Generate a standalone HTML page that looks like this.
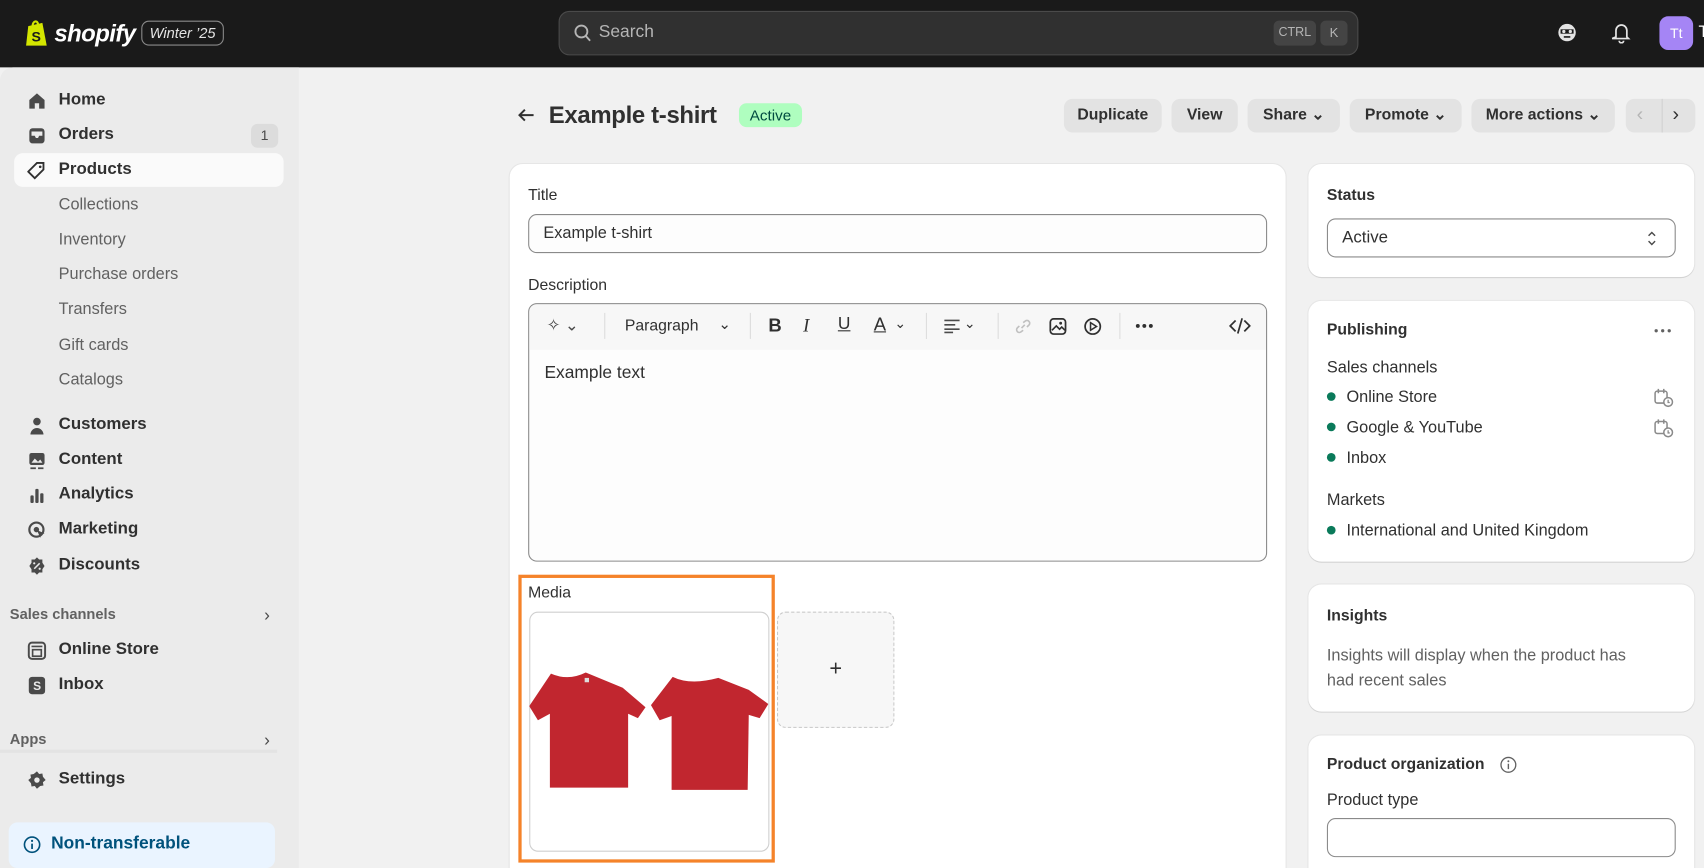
<!DOCTYPE html>
<html><head><meta charset="utf-8">
<style>
*{box-sizing:border-box;margin:0;padding:0}
html,body{width:1704px;height:868px;overflow:hidden;background:#f1f1f1}
#w{position:absolute;left:0;top:0;width:1568px;height:799px;transform:scale(1.08673,1.0864);transform-origin:0 0;font-family:"Liberation Sans",sans-serif;color:#303030;font-size:15px;line-height:1.4;background:#f1f1f1;overflow:hidden}
.a{position:absolute}
.top{left:0;top:0;width:1568px;height:62px;background:#1a1a1a}
.side{left:0;top:62px;width:275px;height:737px;background:#ebebeb;border-top-left-radius:12px}
.nav{position:absolute;left:54px;font-size:15.5px;color:#303030;font-weight:600}
.sub{position:absolute;left:54px;font-size:15px;color:#616161}
.ic{position:absolute;left:25px;width:18px;height:18px}
.btn{position:absolute;top:91px;height:31px;background:#e3e3e3;border-radius:8px;font-size:14.5px;font-weight:600;color:#303030;line-height:31px;text-align:center}
.card{position:absolute;background:#fff;border-radius:12px;box-shadow:0 1px 0 #d4d4d4,0 0 0 1px #e6e6e6}
.lbl{position:absolute;font-size:14.5px;color:#303030}
.h{position:absolute;font-size:14.5px;font-weight:700;color:#303030}
.dot{position:absolute;left:1221px;width:8px;height:8px;border-radius:50%;background:#0a7a5a}
.pt{position:absolute;left:1239px;font-size:15px;color:#303030}
</style></head><body><div id="w">
<div class="a top"></div>
<svg class="a" style="left:22px;top:17px" width="24" height="27" viewBox="0 0 24 27"><path d="M4 7 L17 4 L21 25 L2 25 Z" fill="#d4e600"/><path d="M8 7 C8 2 13 1 13 6" stroke="#d4e600" stroke-width="2" fill="none"/><text x="7" y="21" font-size="13" font-weight="700" fill="#1a1a1a" font-family="Liberation Sans">S</text></svg>
<div class="a" style="left:50px;top:16px;color:#fff;font-size:22px;font-weight:700;font-style:italic;letter-spacing:-0.5px">shopify</div>
<div class="a" style="left:130px;top:19px;width:76px;height:23px;border:1px solid #8a8a8a;border-radius:7px;color:#e3e3e3;font-size:13.5px;font-style:italic;text-align:center;line-height:21px">Winter ’25</div>
<div class="a" style="left:514px;top:10px;width:736px;height:41px;background:#303030;border:1px solid #4a4a4a;border-radius:10px"></div>
<svg class="a" style="left:528px;top:22px" width="16" height="17" viewBox="0 0 16 17"><circle cx="7" cy="7" r="5.5" stroke="#b5b5b5" stroke-width="1.7" fill="none"/><path d="M11 11l4 4.5" stroke="#b5b5b5" stroke-width="1.7"/></svg>
<div class="a" style="left:551px;top:19px;color:#b5b5b5;font-size:16px">Search</div>
<div class="a" style="left:1172px;top:19px;width:39px;height:23px;background:#444;border-radius:5px;color:#b5b5b5;font-size:11.5px;text-align:center;line-height:23px">CTRL</div>
<div class="a" style="left:1215px;top:19px;width:25px;height:23px;background:#444;border-radius:5px;color:#b5b5b5;font-size:12px;text-align:center;line-height:23px">K</div>
<svg class="a" style="left:1432px;top:20px" width="20" height="20" viewBox="0 0 20 20"><circle cx="10" cy="10" r="8" fill="#e3e3e3"/><rect x="4" y="7" width="12" height="4" fill="#1a1a1a"/><circle cx="7" cy="9" r="1.5" fill="#e3e3e3"/><circle cx="13" cy="9" r="1.5" fill="#e3e3e3"/><path d="M7 14h6" stroke="#1a1a1a" stroke-width="1.5"/></svg>
<svg class="a" style="left:1483px;top:20px" width="18" height="20" viewBox="0 0 18 20"><path d="M4 14V8a5 5 0 0110 0v6l1.5 1.5h-15z" stroke="#e3e3e3" stroke-width="1.6" fill="none"/><path d="M7 17.5a2 2 0 004 0" stroke="#e3e3e3" stroke-width="1.6" fill="none"/></svg>
<div class="a" style="left:1527px;top:15px;width:31px;height:31px;background:#a585f5;border-radius:8px;color:#fff;font-size:13px;text-align:center;line-height:31px">Tt</div>
<div class="a" style="left:1563px;top:19px;color:#fff;font-size:15px">T</div>

<div class="a side"></div>
<div class="a" style="left:13px;top:141px;width:248px;height:31px;background:#fafafa;border-radius:8px"></div>
<svg class="ic" style="top:84px" viewBox="0 0 18 18"><path d="M2 8L9 2l7 6v8H11v-5H7v5H2z" fill="#4a4a4a"/></svg>
<div class="nav" style="top:81px">Home</div>
<svg class="ic" style="top:116px" viewBox="0 0 18 18"><rect x="2" y="2" width="14" height="14" rx="3" fill="#4a4a4a"/><path d="M4 9h3l1 2h2l1-2h3V5H4z" fill="#ebebeb"/></svg>
<div class="nav" style="top:113px">Orders</div>
<div class="a" style="left:231px;top:114px;width:25px;height:22px;background:#dcdcdc;border-radius:6px;font-size:13px;text-align:center;line-height:22px;color:#4a4a4a">1</div>
<svg class="ic" style="top:148px" viewBox="0 0 18 18"><path d="M9 2h6v6l-8 8-6-6z" stroke="#303030" stroke-width="1.7" fill="none"/><circle cx="12" cy="5.5" r="1.2" fill="#303030"/></svg>
<div class="nav" style="top:145px">Products</div>
<div class="sub" style="top:178px">Collections</div>
<div class="sub" style="top:210px">Inventory</div>
<div class="sub" style="top:242px">Purchase orders</div>
<div class="sub" style="top:274px">Transfers</div>
<div class="sub" style="top:307px">Gift cards</div>
<div class="sub" style="top:339px">Catalogs</div>
<svg class="ic" style="top:383px" viewBox="0 0 18 18"><circle cx="9" cy="5" r="3.5" fill="#4a4a4a"/><path d="M3 17a6 6 0 0112 0z" fill="#4a4a4a"/></svg>
<div class="nav" style="top:380px">Customers</div>
<svg class="ic" style="top:415px" viewBox="0 0 18 18"><rect x="2" y="2" width="14" height="11" rx="2" fill="#4a4a4a"/><path d="M4 11l3-4 3 3 2-2 2 3z" fill="#ebebeb"/><path d="M3 16h5M10 16h5" stroke="#4a4a4a" stroke-width="1.6"/></svg>
<div class="nav" style="top:412px">Content</div>
<svg class="ic" style="top:447px" viewBox="0 0 18 18"><rect x="3" y="9" width="3" height="7" rx="1" fill="#4a4a4a"/><rect x="7.5" y="3" width="3" height="13" rx="1" fill="#4a4a4a"/><rect x="12" y="7" width="3" height="9" rx="1" fill="#4a4a4a"/></svg>
<div class="nav" style="top:444px">Analytics</div>
<svg class="ic" style="top:479px" viewBox="0 0 18 18"><circle cx="8.5" cy="8.5" r="6.5" stroke="#4a4a4a" stroke-width="2" fill="none"/><circle cx="8.5" cy="8.5" r="2.5" fill="#4a4a4a"/><path d="M9 9l7 3-3 1-1 3z" fill="#4a4a4a"/></svg>
<div class="nav" style="top:476px">Marketing</div>
<svg class="ic" style="top:512px" viewBox="0 0 18 18"><path d="M9 1l2 2h3v3l2 3-2 3v3h-3l-2 2-2-2H4v-3L2 9l2-3V3h3z" fill="#4a4a4a"/><path d="M6.5 11.5l5-5" stroke="#ebebeb" stroke-width="1.4"/><circle cx="6.5" cy="6.5" r="1" fill="#ebebeb"/><circle cx="11.5" cy="11.5" r="1" fill="#ebebeb"/></svg>
<div class="nav" style="top:509px">Discounts</div>
<div class="a" style="left:9px;top:557px;font-size:13.5px;font-weight:700;color:#616161">Sales channels</div>
<div class="a" style="left:243px;top:556px;font-size:16px;color:#4a4a4a">›</div>
<svg class="ic" style="top:590px" viewBox="0 0 18 18"><rect x="1.5" y="1.5" width="15" height="15" rx="3" stroke="#4a4a4a" stroke-width="1.8" fill="none"/><path d="M4 5h10M5 8h8v6H5z" stroke="#4a4a4a" stroke-width="1.5" fill="none"/></svg>
<div class="nav" style="top:587px">Online Store</div>
<svg class="ic" style="top:622px" viewBox="0 0 18 18"><rect x="1.5" y="1" width="15" height="16" rx="3" fill="#4a4a4a"/><text x="5.5" y="13" font-size="11" font-weight="700" fill="#ebebeb" font-family="Liberation Sans">S</text></svg>
<div class="nav" style="top:619px">Inbox</div>
<div class="a" style="left:9px;top:672px;font-size:13.5px;font-weight:700;color:#616161">Apps</div>
<div class="a" style="left:243px;top:671px;font-size:16px;color:#4a4a4a">›</div>
<div class="a" style="left:0;top:690px;width:255px;height:3px;background:#e3e3e3"></div>
<svg class="ic" style="top:709px" viewBox="0 0 18 18"><path d="M9 1l2 2.5 3-.5.5 3L17 9l-2.5 2 .5 3-3 .5L9 17l-2-2.5-3 .5-.5-3L1 9l2.5-2L3 4l3-.5z" fill="#4a4a4a"/><circle cx="9" cy="9" r="2.5" fill="#ebebeb"/></svg>
<div class="nav" style="top:706px">Settings</div>
<div class="a" style="left:8px;top:757px;width:245px;height:42px;background:#eaf4ff;border-radius:8px"></div>
<svg class="a" style="left:21px;top:769px" width="17" height="17" viewBox="0 0 17 17"><circle cx="8.5" cy="8.5" r="7" stroke="#00527c" stroke-width="1.5" fill="none"/><path d="M8.5 7.5v5" stroke="#00527c" stroke-width="1.6"/><circle cx="8.5" cy="5" r="1" fill="#00527c"/></svg>
<div class="a" style="left:47px;top:766px;font-size:16px;font-weight:600;color:#00527c">Non-transferable</div>

<svg class="a" style="left:475px;top:98px" width="18" height="16" viewBox="0 0 18 16"><path d="M16 8H3M8 3L3 8l5 5" stroke="#303030" stroke-width="1.8" fill="none"/></svg>
<div class="a" style="left:505px;top:91px;font-size:22px;font-weight:700;color:#303030;letter-spacing:-0.3px;line-height:30px">Example t-shirt</div>
<div class="a" style="left:680px;top:95px;width:58px;height:22px;background:#affebf;border-radius:7px;color:#014b40;font-size:14px;text-align:center;line-height:22px">Active</div>
<div class="btn" style="left:979px;width:90px">Duplicate</div>
<div class="btn" style="left:1078px;width:61px">View</div>
<div class="btn" style="left:1148px;width:85px">Share ⌄</div>
<div class="btn" style="left:1242px;width:103px">Promote ⌄</div>
<div class="btn" style="left:1354px;width:132px">More actions ⌄</div>
<div class="btn" style="left:1496px;width:64px"></div>
<div class="a" style="left:1529px;top:91px;width:1px;height:31px;background:#d0d0d0"></div>
<div class="a" style="left:1506px;top:93px;font-size:18px;color:#b5b5b5">‹</div>
<div class="a" style="left:1539px;top:93px;font-size:18px;color:#303030">›</div>

<div class="card" style="left:469px;top:151px;width:714px;height:660px"></div>
<div class="lbl" style="left:486px;top:170px">Title</div>
<div class="a" style="left:486px;top:197px;width:680px;height:36px;border:1px solid #8a8a8a;border-radius:8px;background:#fdfdfd"></div>
<div class="a" style="left:500px;top:204px;font-size:15px">Example t-shirt</div>
<div class="lbl" style="left:486px;top:253px">Description</div>
<div class="a" style="left:486px;top:279px;width:680px;height:238px;border:1px solid #8a8a8a;border-radius:8px;background:#fdfdfd;overflow:hidden"><div style="height:42px;background:#f7f7f7"></div></div>
<div class="a" style="left:503px;top:289px;font-size:15px;color:#4a4a4a">✧ ⌄</div>
<div class="a" style="left:556px;top:288px;width:1px;height:24px;background:#ddd"></div>
<div class="a" style="left:575px;top:290px;font-size:14.5px;color:#303030">Paragraph</div>
<div class="a" style="left:661px;top:289px;font-size:14px">⌄</div>
<div class="a" style="left:690px;top:288px;width:1px;height:24px;background:#ddd"></div>
<div class="a" style="left:707px;top:288px;font-size:17px;font-weight:700">B</div>
<div class="a" style="left:739px;top:288px;font-size:17px;font-style:italic;font-family:'Liberation Serif',serif">I</div>
<div class="a" style="left:771px;top:288px;font-size:16px;text-decoration:underline">U</div>
<div class="a" style="left:804px;top:287px;font-size:17px;text-decoration:underline">A</div>
<div class="a" style="left:823px;top:289px;font-size:13px">⌄</div>
<div class="a" style="left:852px;top:288px;width:1px;height:24px;background:#ddd"></div>
<svg class="a" style="left:868px;top:293px" width="16" height="14" viewBox="0 0 16 14"><path d="M1 2h14M1 6h10M1 10h14M1 13h8" stroke="#4a4a4a" stroke-width="1.5"/></svg>
<div class="a" style="left:887px;top:289px;font-size:13px">⌄</div>
<div class="a" style="left:918px;top:288px;width:1px;height:24px;background:#ddd"></div>
<svg class="a" style="left:933px;top:292px" width="17" height="17" viewBox="0 0 17 17"><path d="M7 10l3-3M5 8L3 10a2.5 2.5 0 003.5 3.5L8.5 12M12 9l2-2a2.5 2.5 0 00-3.5-3.5L8.5 5" stroke="#c0c0c0" stroke-width="1.5" fill="none"/></svg>
<svg class="a" style="left:965px;top:292px" width="17" height="17" viewBox="0 0 17 17"><rect x="1.5" y="1.5" width="14" height="14" rx="3" stroke="#303030" stroke-width="1.6" fill="none"/><path d="M3 12l4-4 3 3 2-2 3 3" stroke="#303030" stroke-width="1.5" fill="none"/><circle cx="11" cy="5.5" r="1.3" fill="#303030"/></svg>
<svg class="a" style="left:997px;top:292px" width="17" height="17" viewBox="0 0 17 17"><circle cx="8.5" cy="8.5" r="7" stroke="#303030" stroke-width="1.6" fill="none"/><path d="M6.5 5v7l5.5-3.5z" stroke="#303030" stroke-width="1.4" fill="none"/></svg>
<div class="a" style="left:1030px;top:288px;width:1px;height:24px;background:#ddd"></div>
<svg class="a" style="left:1044px;top:297px" width="18" height="6" viewBox="0 0 18 6"><circle cx="3" cy="3" r="1.8" fill="#303030"/><circle cx="9" cy="3" r="1.8" fill="#303030"/><circle cx="15" cy="3" r="1.8" fill="#303030"/></svg>
<svg class="a" style="left:1131px;top:292px" width="20" height="16" viewBox="0 0 20 16"><path d="M6 3L1 8l5 5M14 3l5 5-5 5M12 1L8 15" stroke="#303030" stroke-width="1.6" fill="none"/></svg>
<div class="a" style="left:501px;top:333px;font-size:16px;color:#303030">Example text</div>

<div class="a" style="left:477px;top:529px;width:236px;height:265px;border:3px solid #f5832a"></div>
<div class="lbl" style="left:486px;top:536px">Media</div>
<div class="a" style="left:487px;top:563px;width:221px;height:221px;border:1px solid #cfcfcf;border-radius:8px;background:#fff"></div>
<svg class="a" style="left:487px;top:615px" width="221" height="115" viewBox="0 0 221 115"><path d="M20 5 Q36 12 52 4 L86 18 L107 36 L100 46 L91 42 L91 110 L19 110 L19 42 L8 48 L0 35 Z" fill="#c1262f"/><rect x="51" y="9" width="4" height="4" fill="#ddd"/><path d="M132 8 Q148 16 174 9 L202 20 L220 33 L212 46 L202 43 L201 112 L131 112 L131 44 L120 48 L112 34 Z" fill="#c1262f"/></svg>
<div class="a" style="left:715px;top:563px;width:108px;height:107px;border:1px dashed #c8c8c8;border-radius:8px;background:#f7f7f7;text-align:center;line-height:105px;font-size:20px;color:#303030">+</div>

<div class="card" style="left:1204px;top:151px;width:355px;height:104px"></div>
<div class="h" style="left:1221px;top:170px">Status</div>
<div class="a" style="left:1221px;top:201px;width:321px;height:36px;border:1px solid #8a8a8a;border-radius:8px"></div>
<div class="a" style="left:1235px;top:208px;font-size:15.5px">Active</div>
<svg class="a" style="left:1514px;top:211px" width="12" height="17" viewBox="0 0 12 17"><path d="M3 6l3-3 3 3M3 11l3 3 3-3" stroke="#4a4a4a" stroke-width="1.3" fill="none"/></svg>

<div class="card" style="left:1204px;top:277px;width:355px;height:240px"></div>
<div class="h" style="left:1221px;top:294px">Publishing</div>
<svg class="a" style="left:1521px;top:302px" width="18" height="5" viewBox="0 0 18 5"><circle cx="3" cy="2.5" r="1.5" fill="#616161"/><circle cx="9" cy="2.5" r="1.5" fill="#616161"/><circle cx="15" cy="2.5" r="1.5" fill="#616161"/></svg>
<div class="lbl" style="left:1221px;top:328px;font-size:15px">Sales channels</div>
<div class="dot" style="top:361px"></div><div class="pt" style="top:355px">Online Store</div>
<div class="dot" style="top:389px"></div><div class="pt" style="top:383px">Google &amp; YouTube</div>
<div class="dot" style="top:417px"></div><div class="pt" style="top:411px">Inbox</div>
<svg class="a" style="left:1521px;top:356px" width="20" height="20" viewBox="0 0 20 20"><rect x="2" y="4" width="11" height="11" rx="2" stroke="#8a8a8a" stroke-width="1.4" fill="none"/><path d="M5 2v4M10 2v4" stroke="#8a8a8a" stroke-width="1.4"/><circle cx="14" cy="14" r="4" fill="#fff" stroke="#8a8a8a" stroke-width="1.4"/><path d="M14 12v2.5h1.5" stroke="#8a8a8a" stroke-width="1.2" fill="none"/></svg>
<svg class="a" style="left:1521px;top:384px" width="20" height="20" viewBox="0 0 20 20"><rect x="2" y="4" width="11" height="11" rx="2" stroke="#8a8a8a" stroke-width="1.4" fill="none"/><path d="M5 2v4M10 2v4" stroke="#8a8a8a" stroke-width="1.4"/><circle cx="14" cy="14" r="4" fill="#fff" stroke="#8a8a8a" stroke-width="1.4"/><path d="M14 12v2.5h1.5" stroke="#8a8a8a" stroke-width="1.2" fill="none"/></svg>
<div class="lbl" style="left:1221px;top:450px;font-size:15px">Markets</div>
<div class="dot" style="top:484px"></div><div class="pt" style="top:478px">International and United Kingdom</div>

<div class="card" style="left:1204px;top:538px;width:355px;height:117px"></div>
<div class="h" style="left:1221px;top:557px">Insights</div>
<div class="a" style="left:1221px;top:592px;width:300px;font-size:15px;color:#616161;line-height:23px">Insights will display when the product has had recent sales</div>

<div class="card" style="left:1204px;top:677px;width:355px;height:140px"></div>
<div class="h" style="left:1221px;top:694px">Product organization</div>
<svg class="a" style="left:1380px;top:696px" width="16" height="16" viewBox="0 0 16 16"><circle cx="8" cy="8" r="6.8" stroke="#616161" stroke-width="1.2" fill="none"/><path d="M8 7v5" stroke="#616161" stroke-width="1.3"/><circle cx="8" cy="4.7" r=".9" fill="#616161"/></svg>
<div class="lbl" style="left:1221px;top:726px;font-size:15px">Product type</div>
<div class="a" style="left:1221px;top:753px;width:321px;height:36px;border:1px solid #8a8a8a;border-radius:8px"></div>
</div></body></html>
